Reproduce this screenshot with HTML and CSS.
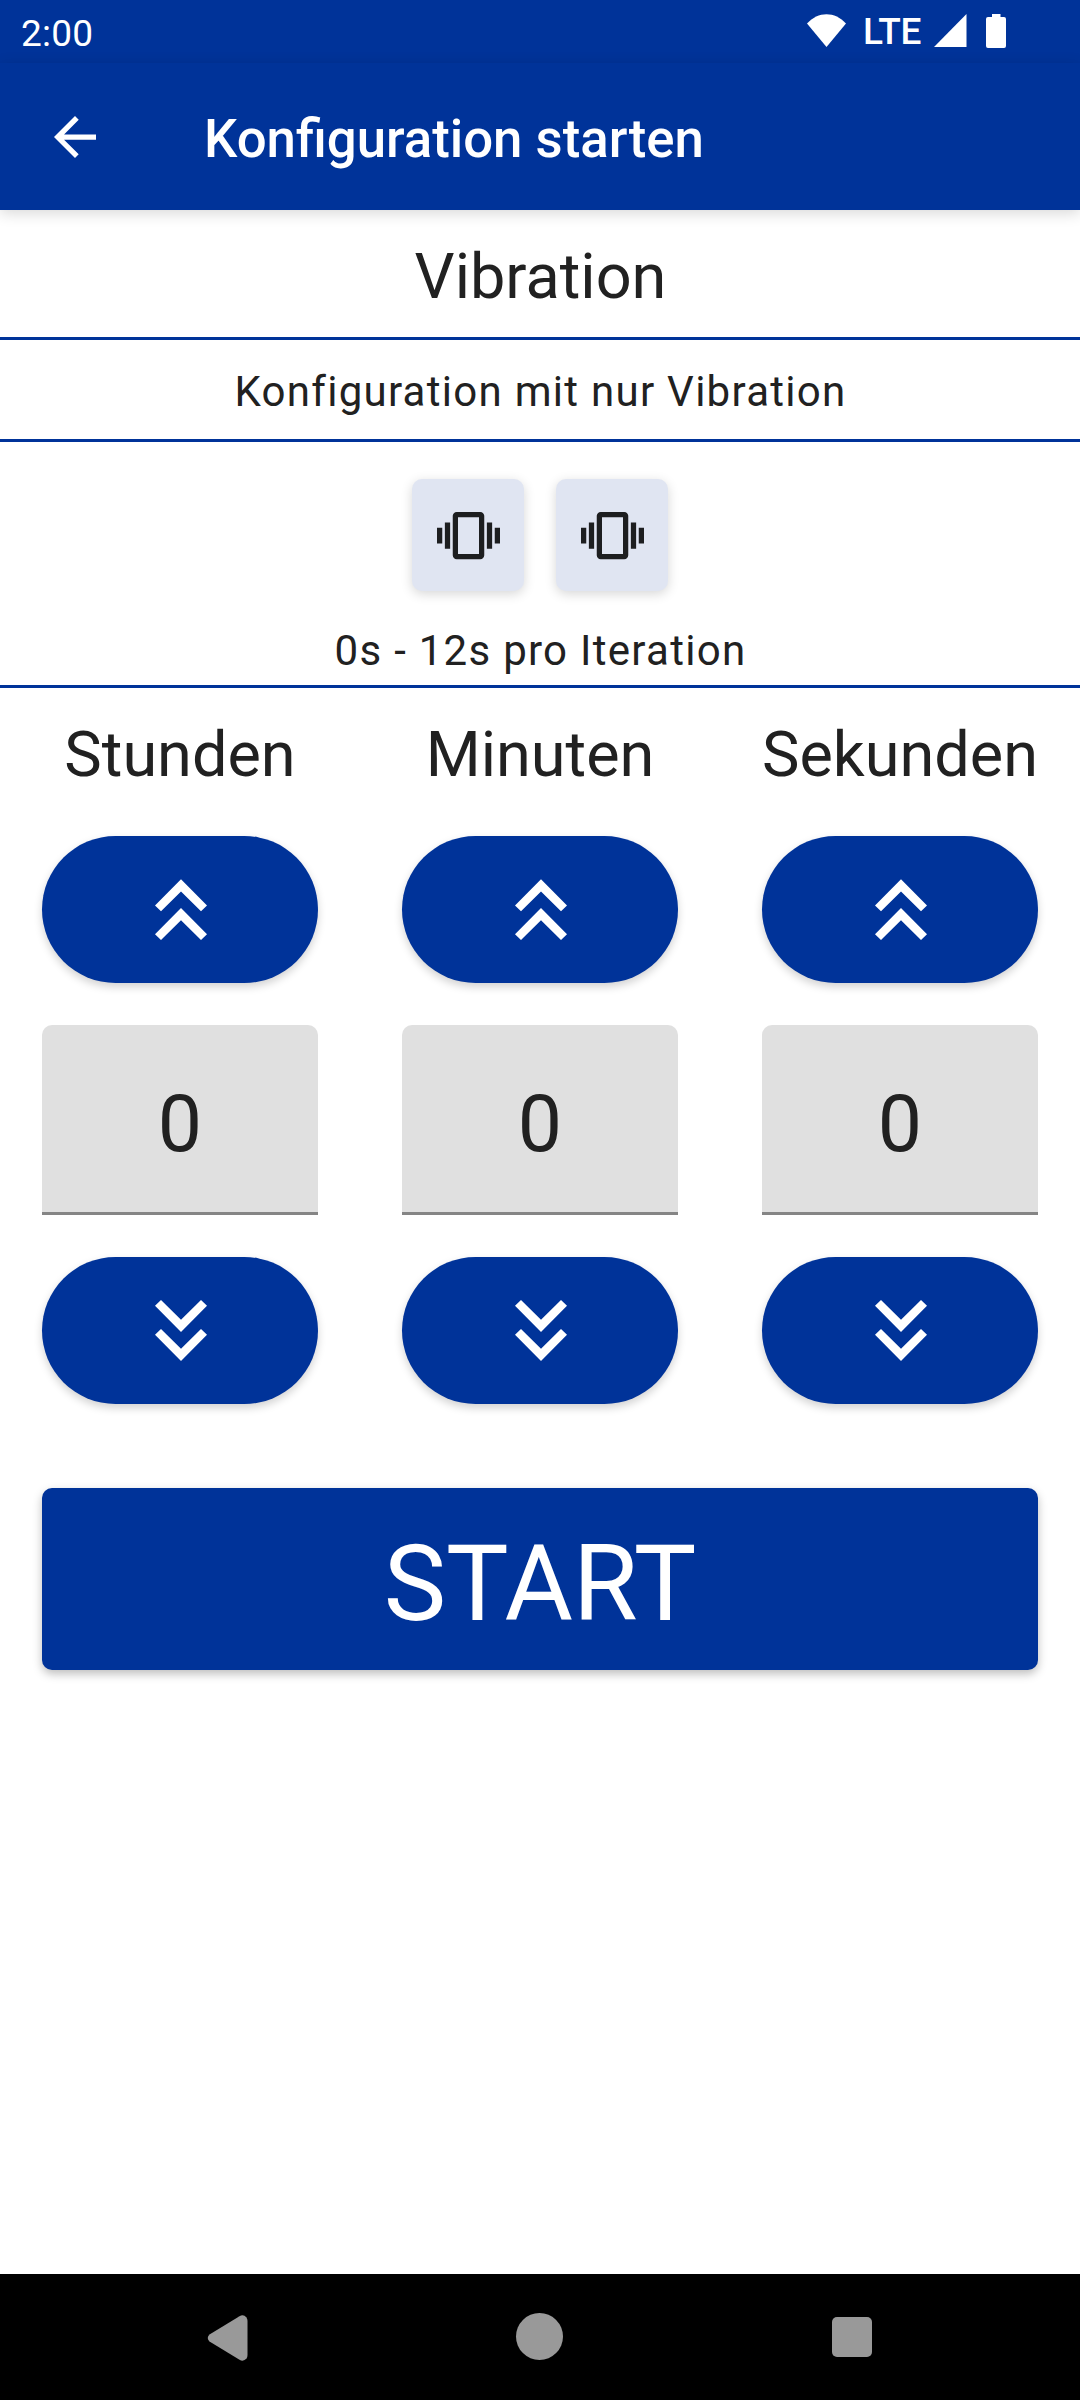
FILE: index.html
```html
<!DOCTYPE html>
<html lang="de">
<head>
<meta charset="utf-8">
<title>Konfiguration starten</title>
<link rel="stylesheet" href="styles.css">
</head>
<body>
<svg class="symbols" aria-hidden="true">
  <symbol id="vibration" viewBox="0 0 24 24"><path d="M0 15h2V9H0v6zm3 2h2V7H3v10zm19-8v6h2V9h-2zm-3 8h2V7h-2v10zM16.500 3h-9C6.670 3 6 3.670 6 4.500v15c0 .830.670 1.500 1.500 1.500h9c.830 0 1.500-.670 1.500-1.500v-15c0-.830-.670-1.500-1.500-1.500zM16 19H8V5h8v14z"/></symbol>
  <symbol id="up" viewBox="0 0 52 61"><path d="M0 26.500 26 0.300 52 26.500 46 32.300 26 12.500 6 32.300ZM0 55.300 26 29.100 52 55.300 46 61 26 41.300 6 61Z"/></symbol>
  <symbol id="down" viewBox="0 0 52 61"><path d="M0 5.800 6 0 26 19.800 46 0 52 5.800 26 32ZM0 34.700 6 29 26 48.700 46 29 52 34.700 26 61Z"/></symbol>
</svg>
<div class="screen">
  <div class="status">
    <span class="clock">2:00</span>
    <div class="signals">
      <svg class="wifi" viewBox="0 0 39 33"><path d="M0 9.500C11-3 28-3 39 9.500L19.500 33Z"/></svg>
      <span class="network">LTE</span>
      <svg class="cell" viewBox="0 0 33 33"><path d="M32.500 0V33H0Z"/></svg>
      <svg class="battery" viewBox="0 0 20 34"><path d="M6 0h8.500v3H18q2 0 2 2v27q0 2-2 2H2q-2 0-2-2V5q0-2 2-2h4Z"/></svg>
    </div>
  </div>
  <header class="appbar">
    <svg class="back" viewBox="4 4 16 16"><path d="M20 11H7.830l5.590-5.590L12 4l-8 8 8 8 1.410-1.410L7.830 13H20v-2z"/></svg>
    <h1 class="title">Konfiguration starten</h1>
  </header>
  <main class="content">
    <h2 class="name">Vibration</h2>
    <p class="description">Konfiguration mit nur Vibration</p>
    <section class="pattern">
      <div class="tiles">
        <div class="tile"><svg class="tile-icon"><use href="#vibration"/></svg></div>
        <div class="tile"><svg class="tile-icon"><use href="#vibration"/></svg></div>
      </div>
      <p class="duration">0s - 12s pro Iteration</p>
    </section>
    <section class="timer">
      <div class="column">
        <h3 class="unit">Stunden</h3>
        <button class="pill"><svg class="chevron"><use href="#up"/></svg></button>
        <div class="field">0</div>
        <button class="pill"><svg class="chevron"><use href="#down"/></svg></button>
      </div>
      <div class="column">
        <h3 class="unit">Minuten</h3>
        <button class="pill"><svg class="chevron"><use href="#up"/></svg></button>
        <div class="field">0</div>
        <button class="pill"><svg class="chevron"><use href="#down"/></svg></button>
      </div>
      <div class="column">
        <h3 class="unit">Sekunden</h3>
        <button class="pill"><svg class="chevron"><use href="#up"/></svg></button>
        <div class="field">0</div>
        <button class="pill"><svg class="chevron"><use href="#down"/></svg></button>
      </div>
    </section>
    <button class="start">START</button>
  </main>
  <nav class="navbar">
    <svg class="nav-back" viewBox="0 0 40 46"><path d="M2 19.500 32 1.200Q36-1 39 2.500Q40 4 40 6V40Q40 42 39 43.500Q36 47 32 44.800L2 26.500Q-1.500 23 2 19.500Z"/></svg>
    <span class="nav-home"></span>
    <span class="nav-recent"></span>
  </nav>
</div>
</body>
</html>
```
FILE: styles.css
```css
* { box-sizing: border-box; }
body, h1, h2, h3, p { margin: 0; font-weight: 400; }
body { font-family: Roboto, sans-serif; color: #212121; background: #fff; }
svg { display: block; fill: currentColor; flex: none; }
button { display: block; border: 0; padding: 0; font: inherit; color: #fff; background: #039; }
.symbols { display: none; }
.screen { width: 1080px; height: 2400px; display: flex; flex-direction: column; overflow: hidden; }

.status { height: 63px; flex: none; display: flex; justify-content: space-between; background: #039; color: #fff; }
.clock { padding: 4px 0 0 21px; font-size: 37px; line-height: 59px; letter-spacing: .2px; }
.signals { display: flex; align-items: flex-start; padding: 14px 74px 0 0; }
.wifi { width: 39px; height: 33px; }
.network { width: 60px; margin: -12px 11px 0 17px; font-size: 37px; line-height: 59px; font-weight: 500; letter-spacing: -.2px; }
.cell { width: 33px; height: 33px; }
.battery { width: 20px; height: 34px; margin-left: 19px; }

.appbar { height: 147px; flex: none; display: flex; align-items: center; padding-left: 54px; background: #039; color: #fff; box-shadow: 0 3px 14px rgba(0,0,0,.16); }
.back { width: 42px; height: 42px; margin-top: 1px; }
.title { margin-left: 108px; padding-top: 5px; font-size: 52.75px; line-height: 62px; font-weight: 500; }

.content { flex: 1; text-align: center; }
.name { height: 130px; padding: 7px 0 0 1px; border-bottom: 3px solid #039; font-size: 63px; line-height: 120px; }
.description { height: 102px; padding: 4px 0 0 1px; border-bottom: 3px solid #039; font-size: 42px; line-height: 95px; letter-spacing: 1.28px; }
.pattern { height: 246px; padding-top: 37px; border-bottom: 3px solid #039; }
.tiles { display: flex; justify-content: center; gap: 32px; }
.tile { width: 112px; height: 112px; display: flex; align-items: center; justify-content: center; border-radius: 10px; background: #e0e5f2; box-shadow: 0 3px 12px rgba(0,0,0,.16); }
.tile-icon { width: 63px; height: 63px; color: #1d1e20; }
.duration { margin-top: 26px; padding-left: 1px; font-size: 42px; line-height: 68px; letter-spacing: 1.28px; }

.timer { display: grid; grid-template-columns: repeat(3, 276px); gap: 84px; padding: 30px 42px 0; }
.column { display: flex; flex-direction: column; gap: 42px; }
.unit { margin-bottom: 2px; font-size: 63px; line-height: 74px; white-space: nowrap; }
.pill { width: 276px; height: 147px; display: flex; align-items: center; justify-content: center; padding-left: 1px; border-radius: 74px; box-shadow: 0 4px 9px rgba(0,0,0,.18); }
.chevron { width: 52px; height: 61px; }
.field { height: 190px; padding-top: 12px; border-bottom: 3px solid #858585; border-radius: 10px 10px 0 0; background: #e0e0e0; font-size: 78.75px; line-height: 175px; }
.start { width: 996px; height: 182px; margin: 84px 42px 0; padding-top: 12px; border-radius: 10px; font-size: 105px; line-height: 170px; box-shadow: 0 4px 10px rgba(0,0,0,.26); }

.navbar { height: 126px; flex: none; display: flex; padding: 39px 0 0 207px; background: #000; color: #999; }
.nav-back { width: 41px; height: 46px; margin-top: 2px; }
.nav-home { width: 47px; height: 47px; margin-left: 268px; border-radius: 50%; background: #999; }
.nav-recent { width: 40px; height: 40px; margin: 4px 0 0 268.5px; border-radius: 5px; background: #999; }
```
